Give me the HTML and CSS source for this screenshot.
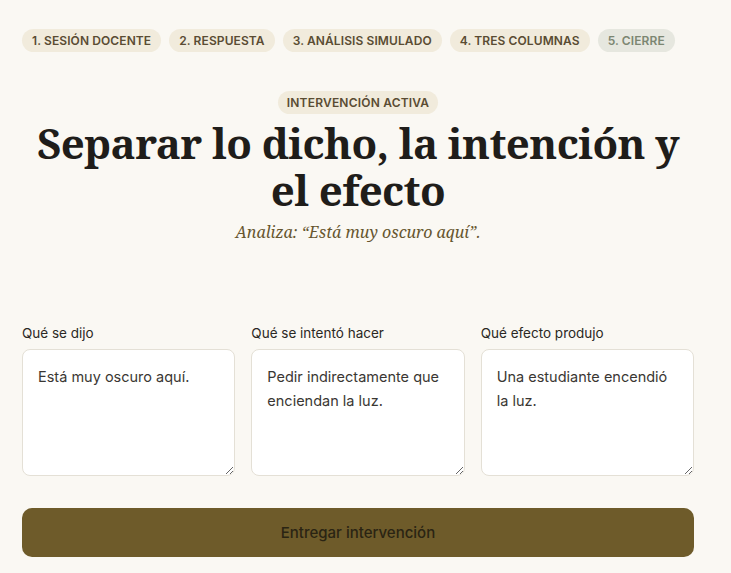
FILE: index.html
```html
<!DOCTYPE html>
<html lang="es">
<head>
<meta charset="utf-8">
<link rel="stylesheet" href="styles.css">
</head>
<body>
<div class="page">
  <nav class="steps">
    <span class="step">1. Sesión docente</span>
    <span class="step">2. Respuesta</span>
    <span class="step">3. Análisis simulado</span>
    <span class="step">4. Tres columnas</span>
    <span class="step step-next">5. Cierre</span>
  </nav>
  <header class="hero">
    <span class="tag">Intervención activa</span>
    <h1 class="title">Separar lo dicho, la intención y el efecto</h1>
    <p class="subtitle">Analiza: “Está muy oscuro aquí”.</p>
  </header>
  <section class="columns">
    <label class="field">
      <span class="label">Qué se dijo</span>
      <textarea class="box">Está muy oscuro aquí.</textarea>
    </label>
    <label class="field">
      <span class="label">Qué se intentó hacer</span>
      <textarea class="box">Pedir indirectamente que enciendan la luz.</textarea>
    </label>
    <label class="field">
      <span class="label">Qué efecto produjo</span>
      <textarea class="box">Una estudiante encendió la luz.</textarea>
    </label>
  </section>
  <button class="submit">Entregar intervención</button>
</div>
</body>
</html>
```
FILE: styles.css
```css
* { box-sizing: border-box; }
html, body { margin: 0; padding: 0; }
body {
  background: #faf8f3;
  font-family: "Inter", "Noto Sans", sans-serif;
  color: #2a2722;
}
.page {
  width: 672px;
  margin-left: 22px;
  padding-top: 29px;
}
.steps {
  display: flex;
  gap: 8px;
}
.step {
  flex: none;
  white-space: nowrap;
  height: 23px;
  line-height: 23px;
  padding: 0 10px;
  border-radius: 12px;
  background: #f1ebdc;
  color: #5a4c33;
  font-size: 12px;
  font-weight: 600;
  letter-spacing: 0.1px;
  text-transform: uppercase;
}
.step-next {
  background: #e6e7df;
  color: #7c8672;
}
.hero {
  display: flex;
  flex-direction: column;
  align-items: center;
  margin-top: 39px;
}
.tag {
  height: 23px;
  line-height: 23px;
  padding: 0 9px;
  border-radius: 12px;
  background: #f1ebdc;
  color: #5a4c33;
  font-size: 12px;
  font-weight: 600;
  letter-spacing: 0.2px;
  text-transform: uppercase;
}
.title {
  margin: 5px 0 0;
  font-family: "Noto Serif", "DejaVu Serif", serif;
  font-weight: 700;
  font-size: 42px;
  line-height: 47px;
  letter-spacing: -0.6px;
  text-align: center;
  color: #1f1d1a;
}
.subtitle {
  margin: 8px 0 0;
  font-family: "Noto Serif", "DejaVu Serif", serif;
  font-style: italic;
  font-size: 16px;
  line-height: 22px;
  color: #66562f;
}
.columns {
  display: grid;
  grid-template-columns: repeat(3, minmax(0, 1fr));
  gap: 16px;
  margin-top: 82px;
}
.field {
  display: flex;
  flex-direction: column;
  gap: 8px;
  min-width: 0;
}
.label {
  font-size: 13.5px;
  color: #2b2824;
}
.box {
  width: 100%;
  height: 127px;
  padding: 15px 15px;
  border: 1.5px solid #e4e0d6;
  border-radius: 8px;
  background: #ffffff;
  font-family: inherit;
  font-size: 14.5px;
  line-height: 24px;
  color: #3a3733;
  resize: vertical;
}
.submit {
  display: block;
  width: 100%;
  height: 49px;
  margin-top: 32px;
  border: none;
  border-radius: 10px;
  background: #6e5b2a;
  color: #2a2413;
  font-family: inherit;
  font-size: 15px;
  font-weight: 500;
}
```
